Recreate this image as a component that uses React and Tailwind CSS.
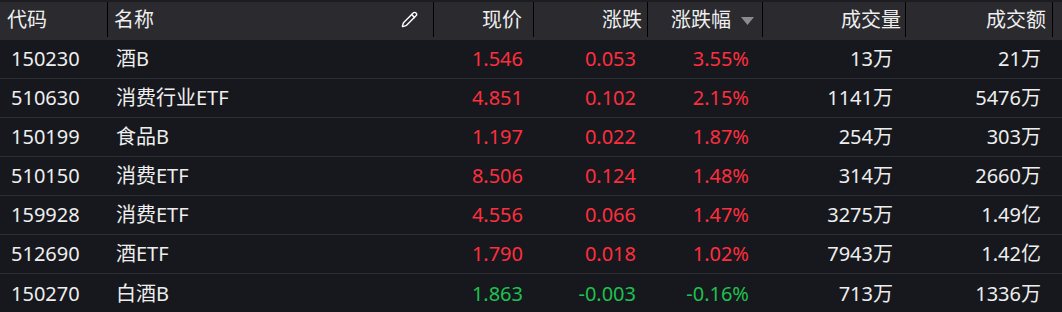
import { Pencil } from "lucide-react";

const rows = [
  { code: "150230", name: "酒B", price: "1.546", chg: "0.053", pct: "3.55%", vol: "13万", amt: "21万", up: true },
  { code: "510630", name: "消费行业ETF", price: "4.851", chg: "0.102", pct: "2.15%", vol: "1141万", amt: "5476万", up: true },
  { code: "150199", name: "食品B", price: "1.197", chg: "0.022", pct: "1.87%", vol: "254万", amt: "303万", up: true },
  { code: "510150", name: "消费ETF", price: "8.506", chg: "0.124", pct: "1.48%", vol: "314万", amt: "2660万", up: true },
  { code: "159928", name: "消费ETF", price: "4.556", chg: "0.066", pct: "1.47%", vol: "3275万", amt: "1.49亿", up: true },
  { code: "512690", name: "酒ETF", price: "1.790", chg: "0.018", pct: "1.02%", vol: "7943万", amt: "1.42亿", up: true },
  { code: "150270", name: "白酒B", price: "1.863", chg: "-0.003", pct: "-0.16%", vol: "713万", amt: "1336万", up: false },
];

function HeadCell({ w, className = "", children }) {
  return (
    <div className={`${w} h-full pb-[3px]`}>
      <div className={`h-full border-r border-black flex items-center ${className}`}>{children}</div>
    </div>
  );
}

export default function App() {
  return (
    <div
      className="w-[1062px] h-[312px] bg-[#16181d] text-[20px] text-[#eeeeee] overflow-hidden"
      style={{ fontFamily: '"Noto Sans", "Noto Sans CJK SC", sans-serif' }}
    >
      {/* header */}
      <div className="flex h-[40px] bg-[#2a2a2f] border-t-2 border-[#1d1d21]">
        <HeadCell w="w-[108px]" className="pl-[7px]">代码</HeadCell>
        <HeadCell w="w-[326px]" className="pl-[6px] pr-[15px] justify-between">
          <span>名称</span>
          <Pencil size={17} strokeWidth={2} className="text-white" />
        </HeadCell>
        <HeadCell w="w-[100px]" className="justify-end pr-[11px]">现价</HeadCell>
        <HeadCell w="w-[114px]" className="justify-end pr-[5px]">涨跌</HeadCell>
        <HeadCell w="w-[115px]" className="justify-end pr-[8px] gap-[10px]">
          <span>涨跌幅</span>
          <svg width="13" height="8" viewBox="0 0 13 8" className="mt-[2px]">
            <path d="M0 0 H13 L6.5 8 Z" fill="#8b8b8b" />
          </svg>
        </HeadCell>
        <HeadCell w="w-[143px]" className="justify-end pr-[4px]">成交量</HeadCell>
        <HeadCell w="w-[147px]" className="justify-end pr-[6px]">成交额</HeadCell>
        <div className="flex-1" />
      </div>

      {/* rows */}
      {rows.map((r, i) => {
        const color = r.up ? "text-[#ff2e3e]" : "text-[#1fc04f]";
        return (
          <div
            key={i}
            className={`flex items-center h-[39px] ${i < rows.length - 1 ? "border-b border-[#2c2e33]" : ""}`}
          >
            <div className="w-[108px] pl-[11px]">{r.code}</div>
            <div className="w-[326px] pl-[8px]">{r.name}</div>
            <div className={`w-[100px] text-right pr-[11px] ${color}`}>{r.price}</div>
            <div className={`w-[114px] text-right pr-[12px] ${color}`}>{r.chg}</div>
            <div className={`w-[115px] text-right pr-[14px] ${color}`}>{r.pct}</div>
            <div className="w-[143px] text-right pr-[13px]">{r.vol}</div>
            <div className="w-[147px] text-right pr-[12px]">{r.amt}</div>
            <div className="flex-1" />
          </div>
        );
      })}
    </div>
  );
}
